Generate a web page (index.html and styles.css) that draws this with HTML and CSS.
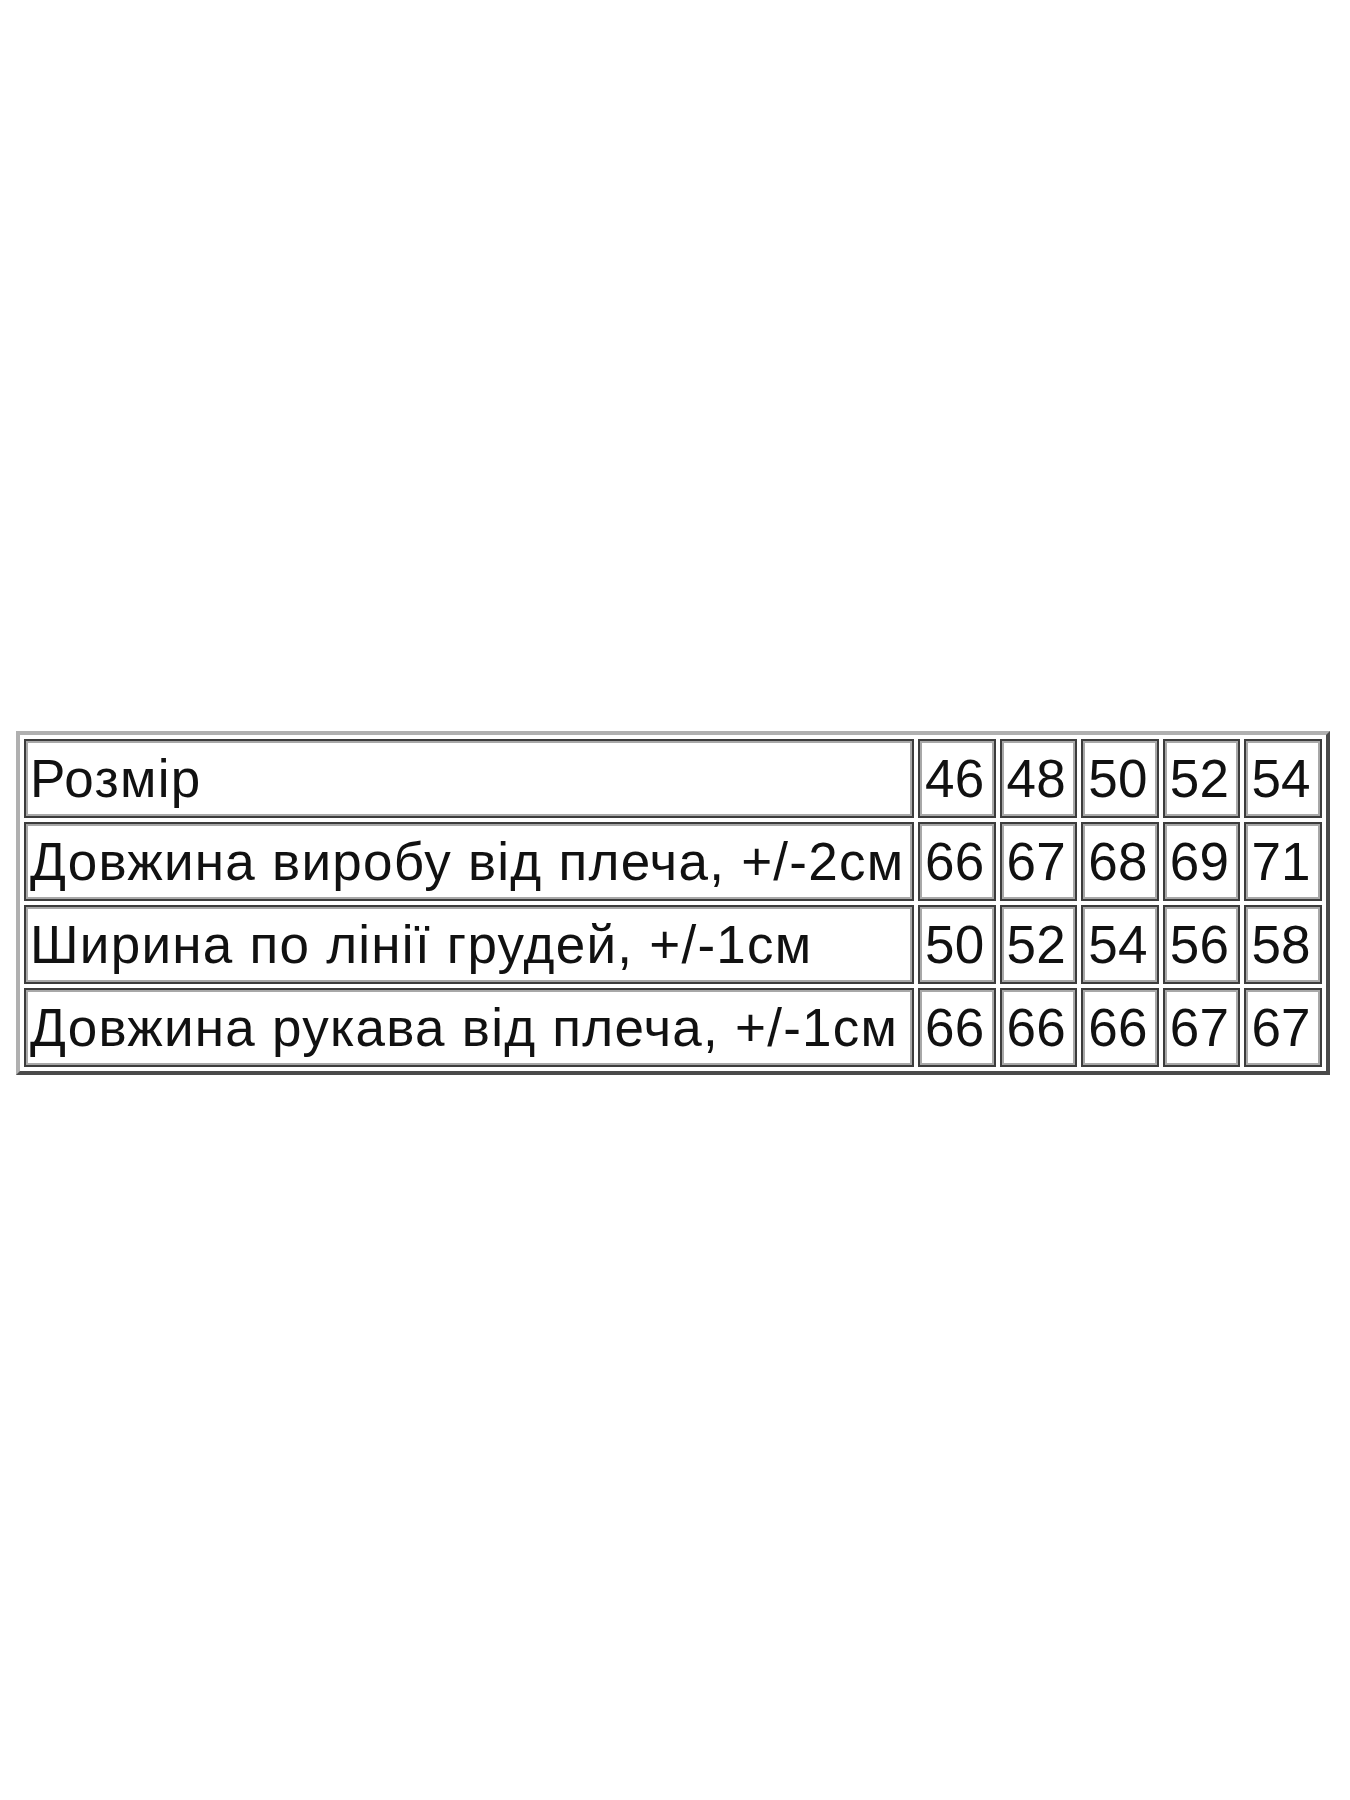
FILE: index.html
```html
<!DOCTYPE html>
<html lang="uk">
<head>
<meta charset="utf-8">
<title>Розмірна сітка</title>
<link rel="stylesheet" href="styles.css">
</head>
<body>
<main class="page">
  <table class="sizes">
    <colgroup>
      <col class="col-label">
      <col class="col-num"><col class="col-num"><col class="col-num"><col class="col-num"><col class="col-num">
    </colgroup>
    <tbody>
      <tr><td class="label">Розмір</td><td>46</td><td>48</td><td>50</td><td>52</td><td>54</td></tr>
      <tr><td class="label">Довжина виробу від плеча, +/-2см</td><td>66</td><td>67</td><td>68</td><td>69</td><td>71</td></tr>
      <tr><td class="label">Ширина по лінії грудей, +/-1см</td><td>50</td><td>52</td><td>54</td><td>56</td><td>58</td></tr>
      <tr><td class="label">Довжина рукава від плеча, +/-1см</td><td>66</td><td>66</td><td>66</td><td>67</td><td>67</td></tr>
    </tbody>
  </table>
</main>
</body>
</html>
```
FILE: styles.css
```css
html, body {
  margin: 0;
  padding: 0;
  background: #ffffff;
}

.page {
  padding: 731px 0 0 16px;
  min-height: 1800px;
  box-sizing: border-box;
}

.sizes {
  width: 1314px;
  table-layout: fixed;
  border-collapse: separate;
  border-spacing: 4px 4px;
  border: 4px solid #b0b0b0;
  border-right-color: #4a4a4a;
  border-bottom-color: #4a4a4a;
  font-family: "Liberation Sans", Arial, sans-serif;
  font-size: 53px;
  color: #111111;
}

.col-label { width: 890px; }
.col-num { width: 77.6px; }

.sizes td {
  box-sizing: border-box;
  height: 79px;
  padding: 0 0 0 5px;
  line-height: 71px;
  white-space: nowrap;
  overflow: hidden;
  border: 2px solid #3c3c3c;
  box-shadow: inset 0 0 0 2px #a8a8a8;
  text-align: left;
  vertical-align: middle;
  letter-spacing: 0.2px;
}

.sizes td.label {
  padding-left: 4px;
  letter-spacing: 1.25px;
}
```
